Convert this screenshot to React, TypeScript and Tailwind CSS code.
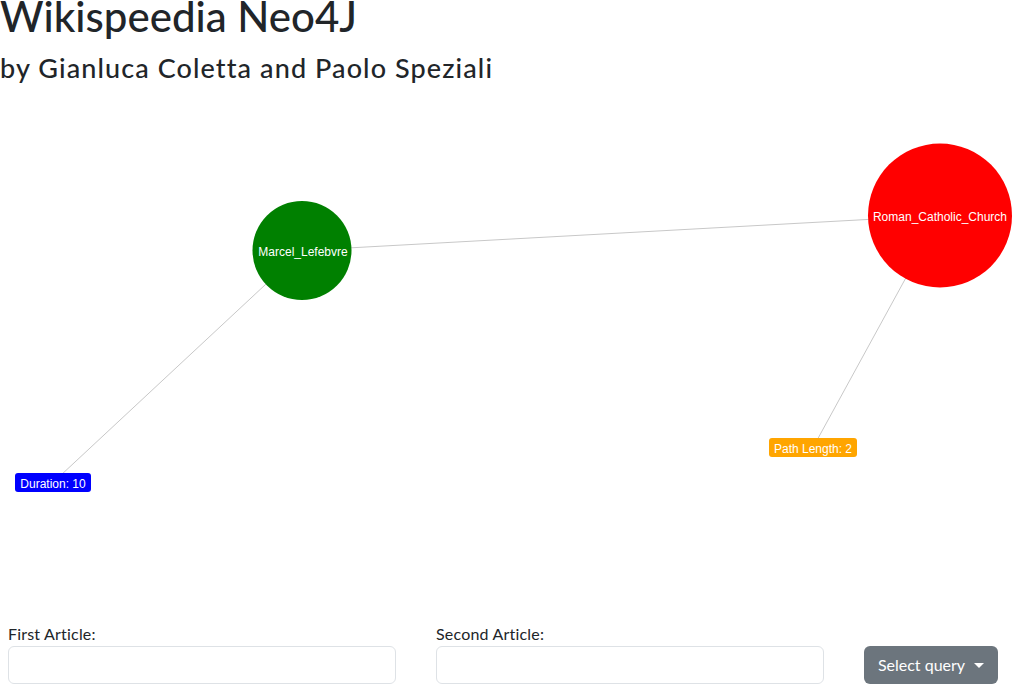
import React from "react";

export default function App() {
  const oy = 86;
  const green = { x: 302, y: 250.5 - oy, r: 49.5 };
  const red = { x: 940, y: 215.5 - oy, r: 72 };
  const dur = { x: 15, y: 473 - oy, w: 76, h: 19 };
  const pl = { x: 769, y: 438 - oy, w: 88, h: 19 };
  return (
    <div className="min-h-screen bg-white text-[#212529]" style={{ fontFamily: '"Lato", "Noto Sans", sans-serif' }}>
      <h1 className="m-0 text-[42px] leading-[32px] font-medium">Wikispeedia Neo4J</h1>
      <h2 className="m-0 mt-[18px] text-[27px] leading-[36px] font-medium tracking-[1.1px]">by Gianluca Coletta and Paolo Speziali</h2>
      <svg width={1013} height={536} className="block" style={{ fontFamily: '"Liberation Sans", Arial, sans-serif' }}>
        <g stroke="#c8c8c8" strokeWidth={1}>
          <line x1={green.x} y1={green.y} x2={red.x} y2={red.y} />
          <line x1={green.x} y1={green.y} x2={dur.x + dur.w / 2} y2={dur.y + dur.h / 2} />
          <line x1={red.x} y1={red.y} x2={pl.x + pl.w / 2} y2={pl.y + pl.h / 2} />
        </g>
        <circle cx={green.x} cy={green.y} r={green.r} fill="#008000" />
        <text x={green.x + 1} y={green.y + 5} fill="#fff" fontSize={12} textAnchor="middle">Marcel_Lefebvre</text>
        <circle cx={red.x} cy={red.y} r={red.r} fill="#ff0000" />
        <text x={red.x} y={red.y + 5} fill="#fff" fontSize={12} textAnchor="middle">Roman_Catholic_Church</text>
        <rect x={dur.x} y={dur.y} width={dur.w} height={dur.h} rx={3} fill="#0000ff" />
        <text x={dur.x + dur.w / 2} y={dur.y + 14.5} fill="#fff" fontSize={12} textAnchor="middle">Duration: 10</text>
        <rect x={pl.x} y={pl.y} width={pl.w} height={pl.h} rx={3} fill="#ffa500" />
        <text x={pl.x + pl.w / 2} y={pl.y + 14.5} fill="#fff" fontSize={12} textAnchor="middle">Path Length: 2</text>
      </svg>
      <div className="flex items-end gap-10 pl-2">
        <div className="w-[388px]">
          <label className="block text-[16px] leading-6 tracking-[0.2px]">First Article:</label>
          <input className="block w-full h-[38px] rounded-[6px] border border-[#dee2e6] bg-white px-3" />
        </div>
        <div className="w-[388px]">
          <label className="block text-[16px] leading-6 tracking-[0.2px]">Second Article:</label>
          <input className="block w-full h-[38px] rounded-[6px] border border-[#dee2e6] bg-white px-3" />
        </div>
        <button className="flex h-[38px] w-[134px] items-center justify-center gap-[9px] rounded-[6px] bg-[#6c757d] text-[16px] text-white">
          <span>Select query</span>
          <span className="inline-block h-0 w-0 border-x-[5px] border-t-[5px] border-x-transparent border-t-white" />
        </button>
      </div>
    </div>
  );
}
